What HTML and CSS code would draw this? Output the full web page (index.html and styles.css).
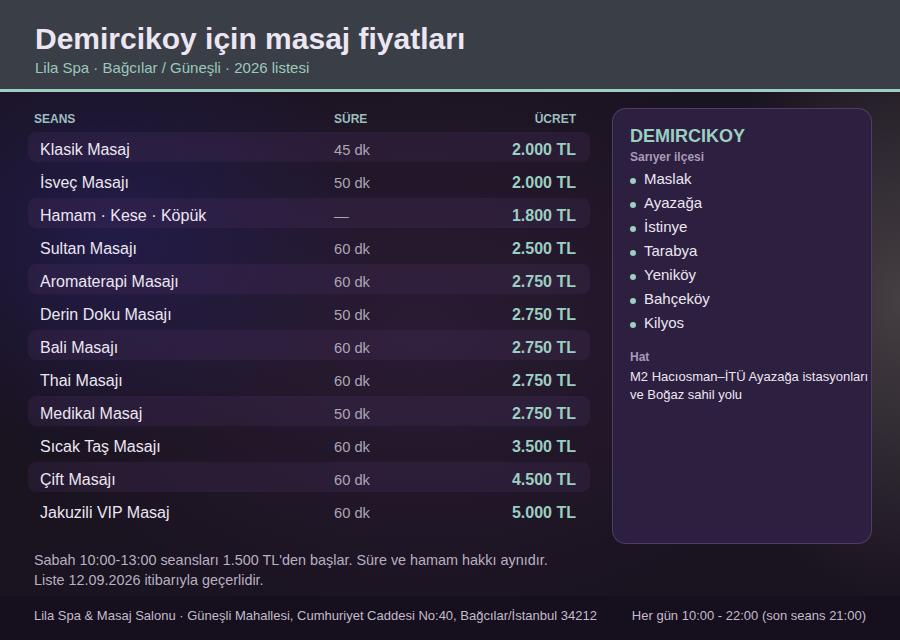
FILE: index.html
```html
<!DOCTYPE html>
<html lang="tr">
<head>
<meta charset="utf-8">
<title>Demircikoy için masaj fiyatları</title>
<link rel="stylesheet" href="styles.css">
</head>
<body>
<header class="top">
  <h1 class="title">Demircikoy için masaj fiyatları</h1>
  <p class="subtitle">Lila Spa · Bağcılar / Güneşli · 2026 listesi</p>
</header>
<main class="main">
  <div class="content">
    <section class="table">
      <div class="thead">
        <span>Seans</span><span>Süre</span><span class="right">Ücret</span>
      </div>
      <div class="row shade"><span class="name">Klasik Masaj</span><span class="dur">45 dk</span><span class="price">2.000 TL</span></div>
      <div class="row"><span class="name">İsveç Masajı</span><span class="dur">50 dk</span><span class="price">2.000 TL</span></div>
      <div class="row shade"><span class="name">Hamam · Kese · Köpük</span><span class="dur">—</span><span class="price">1.800 TL</span></div>
      <div class="row"><span class="name">Sultan Masajı</span><span class="dur">60 dk</span><span class="price">2.500 TL</span></div>
      <div class="row shade"><span class="name">Aromaterapi Masajı</span><span class="dur">60 dk</span><span class="price">2.750 TL</span></div>
      <div class="row"><span class="name">Derin Doku Masajı</span><span class="dur">50 dk</span><span class="price">2.750 TL</span></div>
      <div class="row shade"><span class="name">Bali Masajı</span><span class="dur">60 dk</span><span class="price">2.750 TL</span></div>
      <div class="row"><span class="name">Thai Masajı</span><span class="dur">60 dk</span><span class="price">2.750 TL</span></div>
      <div class="row shade"><span class="name">Medikal Masaj</span><span class="dur">50 dk</span><span class="price">2.750 TL</span></div>
      <div class="row"><span class="name">Sıcak Taş Masajı</span><span class="dur">60 dk</span><span class="price">3.500 TL</span></div>
      <div class="row shade"><span class="name">Çift Masajı</span><span class="dur">60 dk</span><span class="price">4.500 TL</span></div>
      <div class="row"><span class="name">Jakuzili VIP Masaj</span><span class="dur">60 dk</span><span class="price">5.000 TL</span></div>
    </section>
    <aside class="card">
      <h2 class="card-title">DEMIRCIKOY</h2>
      <p class="card-label">Sarıyer ilçesi</p>
      <ul class="places">
        <li>Maslak</li>
        <li>Ayazağa</li>
        <li>İstinye</li>
        <li>Tarabya</li>
        <li>Yeniköy</li>
        <li>Bahçeköy</li>
        <li>Kilyos</li>
      </ul>
      <p class="card-label hat">Hat</p>
      <p class="line">M2 Hacıosman–İTÜ Ayazağa istasyonları ve Boğaz sahil yolu</p>
    </aside>
  </div>
  <div class="notes">
    <p>Sabah 10:00-13:00 seansları 1.500 TL'den başlar. Süre ve hamam hakkı aynıdır.</p>
    <p>Liste 12.09.2026 itibarıyla geçerlidir.</p>
  </div>
</main>
<footer class="foot">
  <span>Lila Spa &amp; Masaj Salonu · Güneşli Mahallesi, Cumhuriyet Caddesi No:40, Bağcılar/İstanbul 34212</span>
  <span>Her gün 10:00 - 22:00 (son seans 21:00)</span>
</footer>
</body>
</html>
```

FILE: styles.css
```css
* { box-sizing: border-box; }
html, body { margin: 0; padding: 0; }
body {
  width: 900px;
  height: 640px;
  overflow: hidden;
  display: flex;
  flex-direction: column;
  font-family: "Liberation Sans", Arial, sans-serif;
  color: #ece6f2;
  background-color: #1a1320;
  background-image:
    radial-gradient(ellipse 260px 220px at 110px 230px, rgba(40, 34, 110, 0.5), rgba(40, 34, 110, 0) 100%),
    radial-gradient(ellipse 200px 300px at 900px 300px, rgba(95, 90, 88, 0.62), rgba(95, 90, 88, 0) 100%),
    radial-gradient(ellipse 420px 300px at 420px 330px, rgba(65, 40, 80, 0.4), rgba(65, 40, 80, 0) 100%);
}
.top {
  background: #3a3f47;
  padding: 21px 35px 13px;
  border-bottom: 3px solid #9ccfc0;
}
.title {
  margin: 0;
  font-size: 30px;
  line-height: 36px;
  font-weight: 700;
  color: #ece6f2;
}
.subtitle {
  margin: 2px 0 0;
  font-size: 15px;
  line-height: 17px;
  color: #9cc8bc;
}
.main {
  flex: 1;
  display: flex;
  flex-direction: column;
  padding: 16px 28px 0;
}
.content {
  display: flex;
  gap: 22px;
  align-items: stretch;
}
.table {
  width: 562px;
  display: flex;
  flex-direction: column;
  gap: 3px;
}
.thead {
  display: grid;
  grid-template-columns: 300px 1fr auto;
  padding: 3px 14px 0 6px;
  margin-bottom: 2px;
  font-size: 12px;
  line-height: 16px;
  font-weight: 700;
  text-transform: uppercase;
  color: #9cbfbf;
}
.right { text-align: right; }
.row {
  display: grid;
  grid-template-columns: 294px 1fr auto;
  align-items: center;
  height: 30px;
  padding: 5px 14px 0 12px;
  border-radius: 8px;
}
.row.shade { background: rgba(72, 48, 92, 0.28); }
.name { font-size: 16px; color: #ece6f2; }
.dur { font-size: 14.7px; color: #ada6b5; }
.price { font-size: 16px; font-weight: 700; color: #9ccfc0; text-align: right; }
.card {
  width: 260px;
  height: 436px;
  background: #2d1f3f;
  border: 1px solid rgba(150, 125, 185, 0.32);
  border-radius: 14px;
  padding: 16px 0 16px 17px;
}
.card-title {
  margin: 0;
  font-size: 18px;
  line-height: 22px;
  font-weight: 700;
  color: #9ccfc0;
}
.card-label {
  margin: 2px 0 0;
  font-size: 12px;
  line-height: 16px;
  font-weight: 700;
  color: #a99bb8;
}
.card-label.hat { margin-top: 14px; }
.places {
  list-style: none;
  margin: 2px 0 0;
  padding: 0;
}
.places li {
  display: flex;
  align-items: center;
  gap: 8px;
  font-size: 15px;
  line-height: 24px;
  color: #ece6f2;
}
.places li::before {
  content: "";
  width: 6px;
  height: 6px;
  border-radius: 50%;
  background: #9ccfc0;
  margin-top: 3px;
}
.line {
  margin: 3px 0 0;
  font-size: 13px;
  line-height: 18px;
  color: #ece6f2;
}
.notes {
  padding: 6px 6px 0;
  font-size: 14.4px;
  line-height: 20px;
  color: #b8b0c0;
}
.notes p { margin: 0; }
.foot {
  height: 44px;
  flex: none;
  display: flex;
  justify-content: space-between;
  padding: 11px 34px 0;
  background: rgba(22, 15, 28, 0.75);
  font-size: 13px;
  line-height: 18px;
  color: #c4bccb;
}
```
